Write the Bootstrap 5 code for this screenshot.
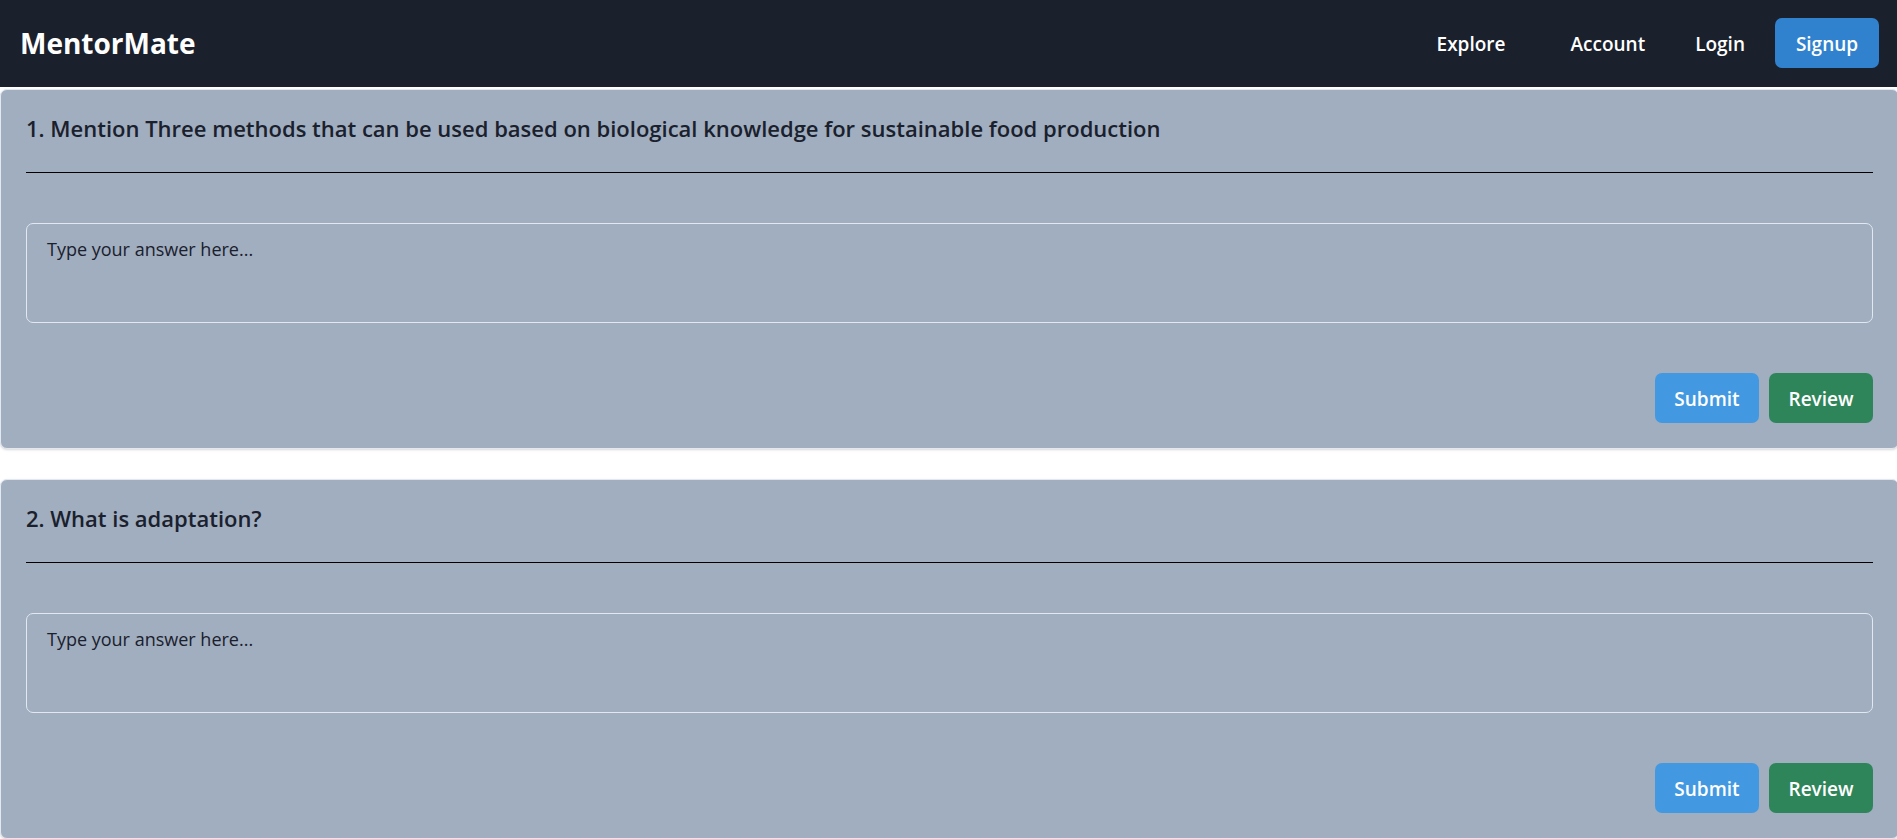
<!DOCTYPE html>
<html lang="en">
<head>
<meta charset="utf-8">
<meta name="viewport" content="width=device-width, initial-scale=1">
<title>MentorMate</title>
<link href="https://cdn.jsdelivr.net/npm/bootstrap@5.3.0/dist/css/bootstrap.min.css" rel="stylesheet">
<style>
  body { font-family: "Open Sans", "Noto Sans", sans-serif; color: #1a202c; font-size: 19px; }
  .site-bar { background: #1a202c; padding: 18px 18px 19px 20px; }
  .brand-text { font-size: 28px; font-weight: 700; line-height: 40px; color: #fff; }
  .btn-tall { height: 50px; padding: 0 20px; border: 0; border-radius: 7px; font-size: 19px; font-weight: 600; line-height: 52px; color: #fff; }
  .btn-tall:hover { color: #fff; filter: brightness(.9); }
  .btn-solid { min-width: 104px; padding: 0 10px; }
  .btn-signup, .btn-signup:hover { background: #3182ce; }
  .btn-submit, .btn-submit:hover { background: #4299e1; }
  .btn-review, .btn-review:hover { background: #2f855a; }
  .nav-gap { gap: 10px; }
  .explore-link { margin-right: 15px; }
  .quiz-list { gap: 30px; padding-top: 2px; overflow-x: hidden; }
  .quiz-card { margin-right: -2px; padding: 25px; background: #a0aec0; border: 1px solid #e2e8f0; border-radius: 7px; color: #1a202c; box-shadow: 0 1px 3px rgba(0,0,0,.1), 0 1px 2px rgba(0,0,0,.06); }
  .quiz-title { font-size: 22px; font-weight: 600; line-height: 27px; }
  .quiz-rule { margin: 30px 0 50px; border-top: 1px solid #000; opacity: 1; }
  .answer-box, .answer-box:focus { height: 100px; margin-bottom: 50px; padding: 10px 20px; background: transparent; border: 1px solid #e2e8f0; border-radius: 7px; color: #1a202c; font-size: 18px; line-height: 30px; resize: none; }
  .answer-box::placeholder { color: #1a202c; opacity: 1; }
</style>
</head>
<body>
<header class="site-bar d-flex flex-wrap align-items-center justify-content-between">
  <a href="#" class="brand-text text-decoration-none">MentorMate</a>
  <nav class="nav-gap d-flex flex-wrap align-items-center">
    <a href="#" class="btn btn-tall explore-link">Explore</a>
    <a href="#" class="btn btn-tall">Account</a>
    <a href="#" class="btn btn-tall">Login</a>
    <button type="button" class="btn btn-tall btn-solid btn-signup">Signup</button>
  </nav>
</header>
<main class="quiz-list d-flex flex-column">
  <form class="quiz-card">
    <h2 class="quiz-title mb-0"><label class="d-block" for="answer1">1. Mention Three methods that can be used based on biological knowledge for sustainable food production</label></h2>
    <hr class="quiz-rule">
    <textarea id="answer1" class="form-control answer-box" placeholder="Type your answer here..."></textarea>
    <div class="nav-gap d-flex justify-content-end">
      <button type="button" class="btn btn-tall btn-solid btn-submit">Submit</button>
      <button type="button" class="btn btn-tall btn-solid btn-review">Review</button>
    </div>
  </form>
  <form class="quiz-card">
    <h2 class="quiz-title mb-0"><label class="d-block" for="answer2">2. What is adaptation?</label></h2>
    <hr class="quiz-rule">
    <textarea id="answer2" class="form-control answer-box" placeholder="Type your answer here..."></textarea>
    <div class="nav-gap d-flex justify-content-end">
      <button type="button" class="btn btn-tall btn-solid btn-submit">Submit</button>
      <button type="button" class="btn btn-tall btn-solid btn-review">Review</button>
    </div>
  </form>
</main>
<script src="https://cdn.jsdelivr.net/npm/bootstrap@5.3.0/dist/js/bootstrap.bundle.min.js"></script>
</body>
</html>
